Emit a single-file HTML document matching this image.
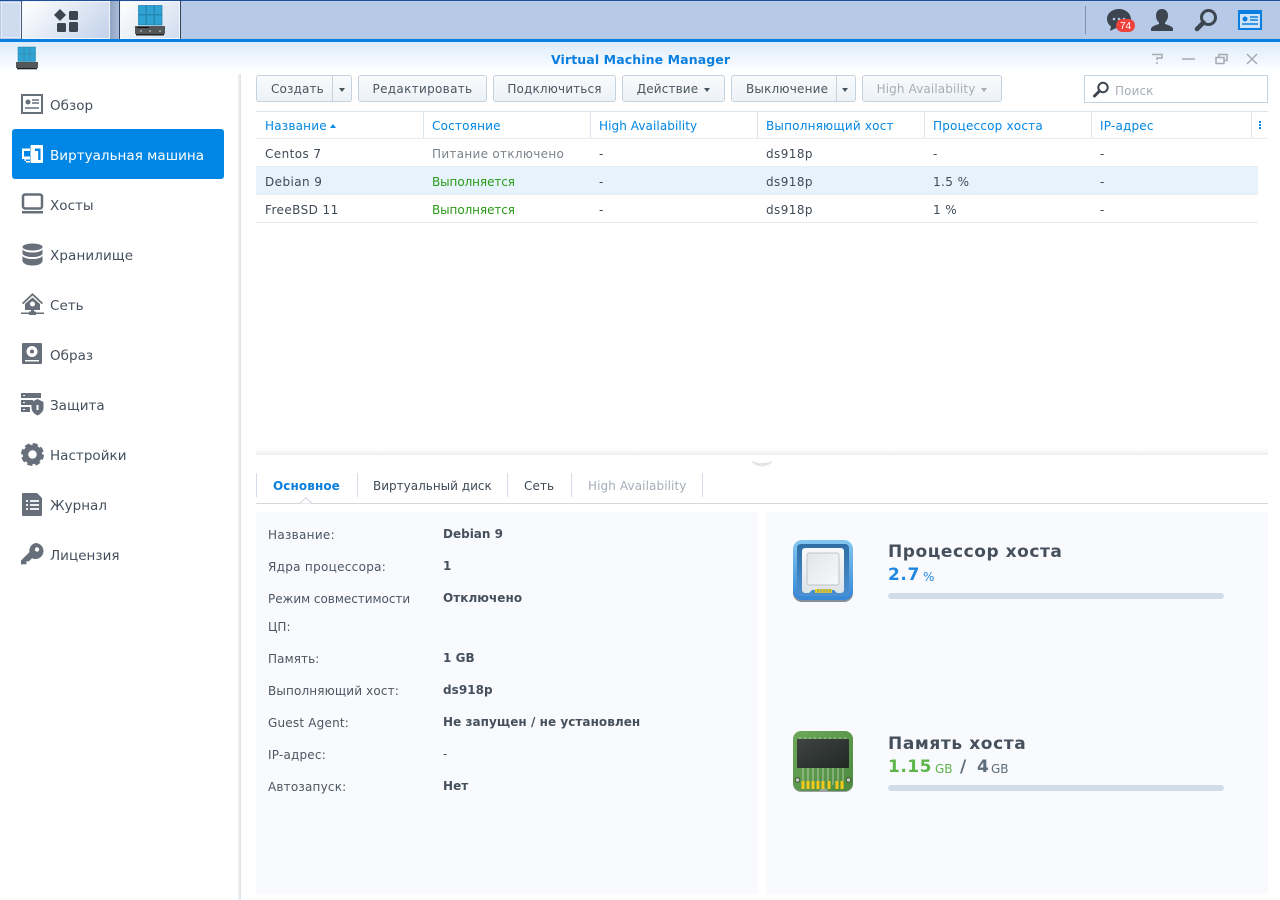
<!DOCTYPE html>
<html lang="ru"><head><meta charset="utf-8"><title>Virtual Machine Manager</title>
<style>
html,body{margin:0;padding:0;background:#fff}
body{width:1280px;height:900px;position:relative;overflow:hidden;font-family:"DejaVu Sans","Liberation Sans",sans-serif;font-size:12px;color:#3f4a56}
.a{position:absolute}
.t{position:absolute;white-space:nowrap;line-height:16px;height:16px;margin-top:1px;letter-spacing:.1px}
.r{letter-spacing:.42px}
.big{margin-top:0;font-size:17px;font-weight:bold;line-height:20px;height:20px}
.nav{font-size:13.5px;color:#45505c;letter-spacing:.03px}
.h{color:#0086e5;letter-spacing:.2px}
.btn{position:absolute;top:75px;height:27px;box-sizing:border-box;border:1px solid #c6d2de;border-radius:3px;background:linear-gradient(#f9fbfd,#edf2f7);text-align:center;line-height:27px;color:#4a5560;white-space:nowrap;letter-spacing:.15px}
.car{display:inline-block;width:0;height:0;border-left:3.5px solid transparent;border-right:3.5px solid transparent;border-top:4px solid #4a5560;vertical-align:1px;margin-left:6px}
.vl{position:absolute;width:1px;top:112px;height:26px;background:#dde5ee}
.hl{position:absolute;left:256px;width:1002px;height:1px;background:#e6ecf2}
.lb{color:#4c5662}
.v{font-weight:bold;color:#46505c;letter-spacing:.05px}
svg{position:absolute;overflow:visible}
</style></head><body>

<!-- taskbar -->
<div class="a" style="left:0;top:0;width:1280px;height:39px;background:#b6c9e6;border-top:1px solid #1f4f98;box-sizing:border-box"></div>
<div class="a" style="left:1px;top:2px;width:20px;height:36px;background:#cfdcf0;border:1px solid #e8eef8;box-sizing:border-box"></div>
<div class="a" style="left:22px;top:1px;width:88px;height:38px;background:linear-gradient(135deg,#ffffff,#c3d2ea);border:1px solid #f0f4fb;box-shadow:-1px 0 0 #4a5c7a;box-sizing:border-box"></div>
<div class="a" style="left:110px;top:1px;width:9px;height:38px;background:linear-gradient(90deg,#8fa3c2,#a9bcd9)"></div>
<div class="a" style="left:120px;top:1px;width:60px;height:38px;background:linear-gradient(135deg,#ffffff,#d0dcef);border:1px solid #f4f7fc;box-shadow:1px 0 0 #33435e,-1px 0 0 #33435e;box-sizing:border-box"></div>
<svg style="left:54px;top:9px" width="24" height="24" fill="#3d4550"><path d="M6 0l6 6-6 6-6-6z"/><rect x="15" y="2" width="9" height="9" rx="1.5"/><rect x="3" y="14" width="9" height="9" rx="1.5"/><rect x="15" y="13" width="9" height="10" rx="1.5"/></svg>
<svg style="left:135px;top:4px" width="32" height="32">
<g fill="#2fa3d4" stroke="#1b7ea8" stroke-width=".7"><rect x="3.500" y="1.500" width="7.500" height="9"/><rect x="11.500" y="1.500" width="7.500" height="9"/><rect x="19.500" y="1.500" width="7.500" height="9"/><rect x="3.500" y="11" width="7.500" height="10"/><rect x="11.500" y="11" width="7.500" height="10"/><rect x="19.500" y="11" width="7.500" height="10"/></g>
<rect x="0" y="22" width="30" height="8" fill="#54575a"/><rect x="1" y="30" width="28" height="1.500" fill="#222"/><rect x="2" y="23" width="12" height="1" fill="#111"/><g fill="#aaa"><circle cx="6" cy="27" r="1"/><circle cx="15" cy="27" r="1"/><circle cx="25" cy="27" r="1"/></g></svg>
<div class="a" style="left:1085px;top:6px;width:1px;height:28px;background:#7f90a8"></div>
<svg style="left:1106px;top:8px" width="32" height="26"><path d="M13 1C6 1 1 5.500 1 11c0 3 1.500 5.500 4 7.500L4 23l5.500-2.800c1 .2 2.300.3 3.500.3 7 0 12-4.500 12-9.500S20 1 13 1z" fill="#3d4550"/><g fill="#b6c9e6"><circle cx="8" cy="11" r="1.300"/><circle cx="13" cy="11" r="1.300"/><circle cx="18" cy="11" r="1.300"/></g><rect x="10" y="11" width="19" height="13" rx="6.500" fill="#f0423c"/><text x="19.500" y="21" font-size="10" fill="#fff" text-anchor="middle" font-family="Liberation Sans">74</text></svg>
<svg style="left:1150px;top:9px" width="24" height="22" fill="#3d4550"><path d="M12 0c4 0 6 3 6 6.500 0 3-1.200 5.500-3 7v1.500c3 1 7 2 8 4.500V22H1v-2.500c1-2.500 5-3.500 8-4.500v-1.500c-1.800-1.500-3-4-3-7C6 3 8 0 12 0z"/></svg>
<svg style="left:1194px;top:9px" width="24" height="23"><circle cx="14.500" cy="8.500" r="7" fill="none" stroke="#3d4550" stroke-width="3"/><path d="M9.500 13.500L3 20" stroke="#3d4550" stroke-width="4.500" stroke-linecap="round"/></svg>
<svg style="left:1238px;top:10px" width="24" height="20"><rect width="24" height="20" fill="#0a7fe0"/><rect x="2" y="4" width="20" height="14" fill="#cfe2f7"/><circle cx="7" cy="9" r="2.500" fill="#0a7fe0"/><path d="M12 7h8M12 10h8M4 14h16" stroke="#0a7fe0" stroke-width="1.500"/></svg>

<!-- title bar -->
<div class="a" style="left:0;top:39px;width:1280px;height:3px;background:#0a7fe0"></div>
<div class="a" style="left:0;top:42px;width:1280px;height:30px;background:linear-gradient(#dcebfb,#ffffff)"></div>
<svg style="left:15px;top:46px" width="24" height="24">
<g fill="#2fa3d4" stroke="#1b7ea8" stroke-width=".5"><rect x="3" y="1" width="5.500" height="7"/><rect x="9" y="1" width="5.500" height="7"/><rect x="15" y="1" width="5.500" height="7"/><rect x="3" y="8.500" width="5.500" height="7"/><rect x="9" y="8.500" width="5.500" height="7"/><rect x="15" y="8.500" width="5.500" height="7"/></g>
<rect x="1" y="16" width="22" height="6" fill="#54575a"/><rect x="2" y="22" width="20" height="1.300" fill="#222"/></svg>
<div class="t" style="left:551px;top:51px;font-weight:bold;color:#0a7fe0;font-size:12.500px">Virtual Machine Manager</div>
<svg style="left:1150px;top:51px" width="110" height="16" fill="none" stroke="#a4abb3" stroke-width="1.500">
<path d="M2 3.500h10v3.500H7v2M7 11v2"/><path d="M32 8h13"/><path d="M66 6.500h8v6h-8zM69 6V3.500h8v6h-3"/><path d="M97 3l10 10M107 3L97 13"/></svg>

<!-- sidebar -->
<div class="a" style="left:238px;top:74px;width:3px;height:826px;background:linear-gradient(90deg,#f2f4f6,#dfe3e7)"></div>
<div class="a" style="left:12px;top:129px;width:212px;height:50px;background:#0086e5;border-radius:3px"></div>
<div class="t nav" style="left:50px;top:97px">Обзор</div>
<div class="t nav" style="left:50px;top:147px;color:#fff">Виртуальная машина</div>
<div class="t nav" style="left:50px;top:197px">Хосты</div>
<div class="t nav" style="left:50px;top:247px;letter-spacing:.12px">Хранилище</div>
<div class="t nav" style="left:50px;top:297px">Сеть</div>
<div class="t nav" style="left:50px;top:347px">Образ</div>
<div class="t nav" style="left:50px;top:397px">Защита</div>
<div class="t nav" style="left:50px;top:447px">Настройки</div>
<div class="t nav" style="left:50px;top:497px">Журнал</div>
<div class="t nav" style="left:50px;top:547px">Лицензия</div>

<svg style="left:21px;top:94px" width="22" height="20"><rect x="1" y="1" width="20" height="18" fill="none" stroke="#666f7a" stroke-width="2"/><circle cx="7" cy="8" r="2.500" fill="#666f7a"/><path d="M11 6h7M11 9h7M4 14h14" stroke="#666f7a" stroke-width="1.600"/></svg>
<svg style="left:21px;top:145px" width="23" height="19"><path d="M1 3.500h8v11H5v3h4v-1.500H3.500V14H1z" fill="#fff"/><rect x="3" y="6" width="6" height="5.500" fill="#0086e5"/><rect x="9.500" y="0" width="12.500" height="18" rx="1" fill="#fff"/><path d="M14 3.500h5.500V15h-2.300V6H14z" fill="#0086e5"/></svg>
<svg style="left:21px;top:193px" width="23" height="22"><rect x="2" y="1.500" width="19" height="14" rx="2" fill="none" stroke="#666f7a" stroke-width="2.500"/><rect x="1" y="18" width="21" height="2.500" fill="#666f7a"/></svg>
<svg style="left:22px;top:243px" width="21" height="23" fill="#666f7a"><ellipse cx="10.500" cy="4" rx="10" ry="3.500"/><path d="M.5 6.500c2 2 5 3 10 3s8-1 10-3V11c-2 2-5 3-10 3s-8-1-10-3zM.5 13c2 2 5 3 10 3s8-1 10-3v5.500c-2 3-5 4-10 4s-8-1-10-4z"/></svg>
<svg style="left:21px;top:293px" width="23" height="23" fill="#666f7a"><path d="M11.500 0L22 10l-1.200 1.200L11.500 2.500 2.200 11.200 1 10z"/><path d="M11.500 4.500L19 11v6H4v-6z"/><circle cx="11.500" cy="11" r="2.500" fill="#fff"/><rect x="10" y="17" width="3" height="3"/><rect x="0" y="19.500" width="8" height="1.500"/><rect x="15" y="19.500" width="8" height="1.500"/><rect x="8" y="18.500" width="7" height="3.500"/></svg>
<svg style="left:22px;top:343px" width="21" height="22"><rect width="20" height="21" rx="1" fill="#666f7a"/><circle cx="10" cy="8.500" r="5.500" fill="#fff"/><circle cx="10" cy="8.500" r="2" fill="#666f7a"/><rect x="3" y="17" width="14" height="1.500" fill="#fff"/></svg>
<svg style="left:21px;top:393px" width="23" height="23" fill="#666f7a"><rect y="0" width="20" height="5"/><rect y="7" width="12" height="5"/><rect y="14" width="9" height="5"/><path d="M16.500 6l6 3v6c0 3.500-3 6-6 7.500-3-1.500-6-4-6-7.500V9z"/><rect x="15.500" y="12" width="2" height="5" fill="#fff"/><g fill="#fff"><rect x="2" y="2" width="2" height="1"/><rect x="2" y="9" width="2" height="1"/><rect x="2" y="16" width="2" height="1"/></g></svg>
<svg style="left:21px;top:443px" width="23" height="23"><circle cx="11.500" cy="11.500" r="7" fill="none" stroke="#666f7a" stroke-width="5.500"/><circle cx="11.500" cy="11.500" r="10" fill="none" stroke="#666f7a" stroke-width="3" stroke-dasharray="5 2.850"/></svg>
<svg style="left:22px;top:493px" width="21" height="23"><path d="M0 1a1 1 0 011-1h14l5 5v17a1 1 0 01-1 1H1a1 1 0 01-1-1z" fill="#666f7a"/><path d="M4 8h2M8 8h9M4 12h2M8 12h9M4 16h2M8 16h9" stroke="#fff" stroke-width="1.800"/></svg>
<svg style="left:21px;top:543px" width="23" height="23"><path d="M14.500 0a8 8 0 11-3.500 15.200l-3 3h-2.500v3H2L0 21.500v-4l8.400-8.400A8 8 0 0114.500 0z" fill="#666f7a"/><circle cx="16" cy="6.500" r="2.200" fill="#fff"/></svg>

<!-- toolbar -->
<div class="btn" style="left:256px;width:96px;text-align:left;padding-left:14px">Создать<span class="a" style="left:75px;top:0;width:1px;height:25px;background:#c6d2de"></span><span class="car" style="position:absolute;left:82px;top:12px;margin:0"></span></div>
<div class="btn" style="left:358px;width:129px;letter-spacing:.32px">Редактировать</div>
<div class="btn" style="left:493px;width:123px">Подключиться</div>
<div class="btn" style="left:622px;width:103px">Действие<span class="car"></span></div>
<div class="btn" style="left:731px;width:125px;text-align:left;padding-left:14px;letter-spacing:.2px">Выключение<span class="a" style="left:104px;top:0;width:1px;height:25px;background:#c6d2de"></span><span class="car" style="position:absolute;left:110px;top:12px;margin:0"></span></div>
<div class="btn" style="left:862px;width:140px;color:#a5aeb8;letter-spacing:.12px">High Availability<span class="car" style="border-top-color:#a5aeb8"></span></div>
<div class="a" style="left:1084px;top:75px;width:184px;height:28px;box-sizing:border-box;border:1px solid #c6d2de;background:#fff"></div>
<svg style="left:1092px;top:81px" width="18" height="17"><circle cx="11" cy="6.500" r="4.700" fill="none" stroke="#3d4550" stroke-width="2"/><path d="M7.500 10L2.500 15" stroke="#3d4550" stroke-width="3" stroke-linecap="round"/></svg>
<div class="t" style="left:1115px;top:82px;color:#a5aeb8">Поиск</div>

<!-- grid -->
<div class="a" style="left:256px;top:111px;width:1012px;height:1px;background:#dde5ee"></div>
<div class="a" style="left:256px;top:138px;width:1012px;height:1px;background:#e6ecf2"></div>
<div class="vl" style="left:423px"></div><div class="vl" style="left:590px"></div><div class="vl" style="left:757px"></div><div class="vl" style="left:924px"></div><div class="vl" style="left:1091px"></div><div class="vl" style="left:1251px"></div>
<div class="t h" style="left:265px;top:117px">Название</div>
<div class="a" style="left:330px;top:124px;width:0;height:0;border-left:3.500px solid transparent;border-right:3.500px solid transparent;border-bottom:4px solid #0086e5"></div>
<div class="t h" style="left:432px;top:117px">Состояние</div>
<div class="t h" style="left:599px;top:117px;letter-spacing:.08px">High Availability</div>
<div class="t h" style="left:766px;top:117px">Выполняющий хост</div>
<div class="t h" style="left:933px;top:117px">Процессор хоста</div>
<div class="t h" style="left:1100px;top:117px">IP-адрес</div>
<div class="a" style="left:1259px;top:121px;width:2px;height:2px;background:#0086e5;box-shadow:0 3px 0 #0086e5,0 6px 0 #0086e5"></div>

<div class="a" style="left:256px;top:167px;width:1002px;height:28px;background:#e6f3fd"></div>
<div class="hl" style="top:166px"></div><div class="hl" style="top:194px"></div><div class="hl" style="top:222px"></div>

<div class="t r" style="left:265px;top:145px">Centos 7</div>
<div class="t" style="left:432px;top:145px;color:#7b838c;letter-spacing:.3px">Питание отключено</div>
<div class="t" style="left:599px;top:145px">-</div><div class="t r" style="left:766px;top:145px">ds918p</div><div class="t" style="left:933px;top:145px">-</div><div class="t" style="left:1100px;top:145px">-</div>

<div class="t r" style="left:265px;top:173px">Debian 9</div>
<div class="t" style="left:432px;top:173px;color:#2a9a16;letter-spacing:-.08px">Выполняется</div>
<div class="t" style="left:599px;top:173px">-</div><div class="t r" style="left:766px;top:173px">ds918p</div><div class="t r" style="left:933px;top:173px">1.5 %</div><div class="t" style="left:1100px;top:173px">-</div>

<div class="t r" style="left:265px;top:201px">FreeBSD 11</div>
<div class="t" style="left:432px;top:201px;color:#2a9a16;letter-spacing:-.08px">Выполняется</div>
<div class="t" style="left:599px;top:201px">-</div><div class="t r" style="left:766px;top:201px">ds918p</div><div class="t r" style="left:933px;top:201px">1 %</div><div class="t" style="left:1100px;top:201px">-</div>

<!-- splitter -->
<div class="a" style="left:256px;top:449px;width:1012px;height:6px;background:linear-gradient(#fdfdfd,#eceeef)"></div>
<svg style="left:751px;top:460px" width="22" height="8"><path d="M1 1q10 4 20 0v1.500q-5 4-10 4t-10-4z" fill="#e3e6e9"/></svg>

<!-- tabs -->
<div class="a" style="left:256px;top:503px;width:1012px;height:1px;background:#d4d9de"></div>
<div class="a" style="left:256px;top:473px;width:1px;height:24px;background:#d5dee8"></div>
<div class="a" style="left:357px;top:473px;width:1px;height:24px;background:#d5dee8"></div>
<div class="a" style="left:507px;top:473px;width:1px;height:24px;background:#d5dee8"></div>
<div class="a" style="left:571px;top:473px;width:1px;height:24px;background:#d5dee8"></div>
<div class="a" style="left:702px;top:473px;width:1px;height:24px;background:#d5dee8"></div>
<svg style="left:296px;top:497px" width="20" height="8"><path d="M0 6.500h4l6-6 6 6h4" fill="#fff" stroke="#d4d9de"/></svg>
<div class="t" style="left:273px;top:477px;font-weight:bold;color:#0a7fe0">Основное</div>
<div class="t" style="left:373px;top:477px;letter-spacing:0">Виртуальный диск</div>
<div class="t" style="left:524px;top:477px">Сеть</div>
<div class="t" style="left:588px;top:477px;color:#a5aeb8">High Availability</div>

<!-- panels -->
<div class="a" style="left:256px;top:512px;width:502px;height:382px;background:#f8fafe"></div>
<div class="a" style="left:766px;top:512px;width:502px;height:382px;background:#f8fafe"></div>

<div class="t lb" style="left:268px;top:526px;letter-spacing:.3px">Название:</div><div class="t v" style="left:443px;top:525px;letter-spacing:0">Debian 9</div>
<div class="t lb" style="left:268px;top:558px;letter-spacing:.3px">Ядра процессора:</div><div class="t v" style="left:443px;top:557px">1</div>
<div class="t lb" style="left:268px;top:590px;letter-spacing:-.03px">Режим совместимости</div><div class="t v" style="left:443px;top:589px">Отключено</div>
<div class="t lb" style="left:268px;top:618px">ЦП:</div>
<div class="t lb" style="left:268px;top:650px">Память:</div><div class="t v" style="left:443px;top:649px">1 GB</div>
<div class="t lb" style="left:268px;top:682px;letter-spacing:.14px">Выполняющий хост:</div><div class="t v" style="left:443px;top:681px">ds918p</div>
<div class="t lb" style="left:268px;top:714px;letter-spacing:.2px">Guest Agent:</div><div class="t v" style="left:443px;top:713px">Не запущен / не установлен</div>
<div class="t lb" style="left:268px;top:746px;letter-spacing:.2px">IP-адрес:</div><div class="t v" style="left:443px;top:745px;font-weight:normal">-</div>
<div class="t lb" style="left:268px;top:778px;letter-spacing:.2px">Автозапуск:</div><div class="t v" style="left:443px;top:777px">Нет</div>

<!-- cpu -->
<svg style="left:793px;top:540px" width="60" height="62">
<defs><linearGradient id="c1" x1="0" y1="0" x2="0" y2="1"><stop offset="0" stop-color="#84c8f0"/><stop offset="1" stop-color="#3587d6"/></linearGradient><linearGradient id="c2" x1="0" y1="0" x2="0" y2="1"><stop offset="0" stop-color="#2f6ea5"/><stop offset="1" stop-color="#4a90d2"/></linearGradient><linearGradient id="c3" x1="0" y1="0" x2="0" y2="1"><stop offset="0" stop-color="#f8f9fa"/><stop offset="1" stop-color="#dfe4e8"/></linearGradient><linearGradient id="c4" x1="0" y1="0" x2="1" y2="1"><stop offset="0" stop-color="#e2e5e8"/><stop offset="1" stop-color="#f7f8f9"/></linearGradient><linearGradient id="g1" x1="0" y1="0" x2="1" y2="1"><stop offset="0" stop-color="#6da85a"/><stop offset="1" stop-color="#4c8a3f"/></linearGradient><linearGradient id="g2" x1="0" y1="0" x2="1" y2="1"><stop offset="0" stop-color="#3f4442"/><stop offset="1" stop-color="#222824"/></linearGradient></defs>
<rect x="0" y="1.500" width="60" height="60.500" rx="9" fill="#3a4550" opacity=".6"/>
<rect x="0" y="0" width="60" height="60" rx="9" fill="url(#c1)"/>
<rect x="4" y="4" width="52" height="52" rx="4" fill="url(#c2)"/>
<path d="M12 8h36a3 3 0 013 3v39a3 3 0 01-3 3h-4l-3-3H19l-3 3h-4a3 3 0 01-3-3V11a3 3 0 013-3z" fill="url(#c3)"/>
<rect x="14" y="13" width="32" height="32" rx="2" fill="url(#c4)" stroke="#bfc5cb"/>
<rect x="22" y="49" width="17" height="4" fill="#f0d020"/>
<path d="M25 49v4M28 49v4M31 49v4M34 49v4M37 49v4" stroke="#3d86bd" stroke-width=".8"/>
</svg>
<div class="t big" style="left:888px;top:542px;color:#46505c;letter-spacing:.55px">Процессор хоста</div>
<div class="t big" style="left:888px;top:565px;color:#1f86e2;letter-spacing:.6px">2.7</div>
<div class="t" style="left:923px;top:568px;font-size:12px;color:#1f86e2">%</div>
<div class="a" style="left:888px;top:593px;width:336px;height:6px;border-radius:3px;background:#d0dce7"></div>

<!-- ram -->
<svg style="left:793px;top:731px" width="60" height="61">
<rect x="0" y="1" width="60" height="60" rx="8" fill="#3f4a3f" opacity=".5"/>
<path d="M8 0h44a8 8 0 018 8v44a8 8 0 01-8 8H35l-2-2.500h-5L26 60H8a8 8 0 01-8-8V8a8 8 0 018-8z" fill="url(#g1)"/>
<rect x="4" y="8" width="52" height="29" rx="1" fill="url(#g2)"/>
<path d="M7 6v2M12 6v2M17 6v2M22 6v2M27 6v2M32 6v2M37 6v2M42 6v2M47 6v2M52 6v2M10 37v17M15 37v17M20 37v17M25 37v17M30 37v17M35 37v17M40 37v17M45 37v17M50 37v17" stroke="#c5d6b8" stroke-width=".8"/>
<g fill="#f2c81a"><rect x="8.500" y="50" width="3" height="8"/><rect x="13.500" y="50" width="3" height="8"/><rect x="18.500" y="50" width="3" height="8"/><rect x="23.500" y="50" width="3" height="8"/><rect x="28.500" y="50" width="3" height="8"/><rect x="34.500" y="50" width="3" height="8"/><rect x="42.500" y="50" width="3" height="8"/><rect x="47.500" y="50" width="3" height="8"/></g>
<circle cx="4.500" cy="49" r="2.300" fill="#c8cfc8" stroke="#38562e"/><circle cx="55.500" cy="49" r="2.300" fill="#c8cfc8" stroke="#38562e"/>
</svg>
<div class="t big" style="left:888px;top:734px;color:#46505c;letter-spacing:.6px">Память хоста</div>
<div class="t big" style="left:888px;top:757px;color:#5cb64a;letter-spacing:.5px">1.15</div>
<div class="t" style="left:935px;top:760px;font-size:12px;color:#5cb64a;letter-spacing:0">GB</div>
<div class="t big" style="left:960px;top:757px;color:#5f6c7a">/</div>
<div class="t big" style="left:977px;top:757px;color:#5f6c7a">4</div>
<div class="t" style="left:991px;top:760px;font-size:12px;color:#5f6c7a;letter-spacing:0">GB</div>
<div class="a" style="left:888px;top:785px;width:336px;height:6px;border-radius:3px;background:#d0dce7"></div>

</body></html>
